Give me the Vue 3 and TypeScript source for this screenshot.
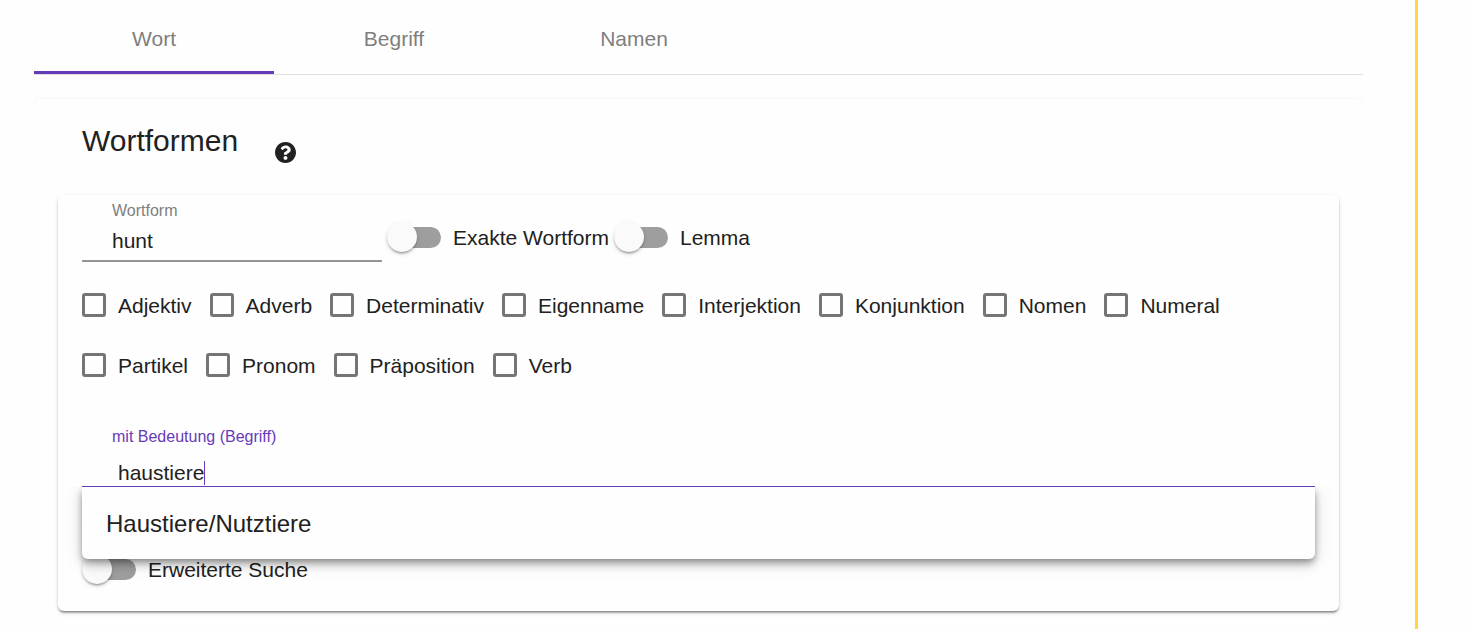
<script setup lang="ts">
import { ref } from 'vue'

const tabs: string[] = ['Wort', 'Begriff', 'Namen']
const activeTab = ref(0)

const wordForm = ref('hunt')
const meaning = ref('haustiere')
const exact = ref(false)
const lemma = ref(false)
const advanced = ref(false)

const wordClasses: string[] = [
  'Adjektiv', 'Adverb', 'Determinativ', 'Eigenname', 'Interjektion', 'Konjunktion',
  'Nomen', 'Numeral', 'Partikel', 'Pronom', 'Präposition', 'Verb',
]
const selectedClasses = ref<string[]>([])
const suggestions: string[] = ['Haustiere/Nutztiere']
</script>

<template>
  <div class="page">
    <main class="content">
      <nav class="tabs" role="tablist">
        <button
          v-for="(tab, i) in tabs"
          :key="tab"
          type="button"
          role="tab"
          class="tab"
          :class="{ active: i === activeTab }"
          :aria-selected="i === activeTab"
          @click="activeTab = i"
        >{{ tab }}</button>
      </nav>

      <div class="tab-body">
        <section class="panel">
          <header class="panel-head">
            <h1 class="title">Wortformen</h1>
            <button type="button" class="help" aria-label="Hilfe">
              <svg viewBox="8 8 496 496" aria-hidden="true">
                <path fill="currentColor" d="M504 256c0 136.997-111.043 248-248 248S8 392.997 8 256C8 119.083 119.043 8 256 8s248 111.083 248 248zM262.655 90c-54.497 0-89.255 22.957-116.549 63.758-3.536 5.286-2.353 12.415 2.715 16.258l34.699 26.31c5.205 3.947 12.621 3.008 16.665-2.122 17.864-22.658 30.113-35.797 57.303-35.797 20.429 0 45.698 13.148 45.698 32.958 0 14.976-12.363 22.667-32.534 33.976C247.128 238.528 216 254.941 216 296v4c0 6.627 5.373 12 12 12h56c6.627 0 12-5.373 12-12v-1.333c0-28.462 83.186-29.647 83.186-106.667 0-58.002-60.165-102-116.531-102zM256 338c-25.365 0-46 20.635-46 46 0 25.364 20.635 46 46 46s46-20.636 46-46c0-25.364-20.635-46-46-46z" />
              </svg>
            </button>
          </header>

          <form class="card" @submit.prevent>
            <div class="word-row">
              <div class="field">
                <label class="field-label" for="wordform">Wortform</label>
                <input id="wordform" v-model="wordForm" class="field-input" type="text" />
              </div>
              <label class="toggle">
                <input v-model="exact" class="switch" type="checkbox" role="switch" />
                <span>Exakte Wortform</span>
              </label>
              <label class="toggle">
                <input v-model="lemma" class="switch" type="checkbox" role="switch" />
                <span>Lemma</span>
              </label>
            </div>

            <div class="classes">
              <label v-for="name in wordClasses" :key="name" class="check">
                <input v-model="selectedClasses" class="box" type="checkbox" :value="name" />
                <span class="check-text">{{ name }}</span>
              </label>
            </div>

            <div class="meaning">
              <label class="field-label focused" for="meaning">mit Bedeutung (Begriff)</label>
              <div class="meaning-line">
                <input id="meaning" v-model="meaning" class="meaning-input" type="text" autocomplete="off" />
                <span class="caret" aria-hidden="true"></span>
              </div>
              <div class="options" role="listbox">
                <button
                  v-for="item in suggestions"
                  :key="item"
                  type="button"
                  role="option"
                  class="option"
                  @click="meaning = item"
                >{{ item }}</button>
              </div>
            </div>

            <label class="toggle">
              <input v-model="advanced" class="switch" type="checkbox" role="switch" />
              <span>Erweiterte Suche</span>
            </label>
          </form>
        </section>
      </div>
    </main>
  </div>
</template>

<style>
body {
  background: #fefefe;
}
</style>

<style scoped>
.page {
  box-sizing: border-box;
  min-height: 100vh;
  display: flex;
  padding-right: 55px;
  font-family: "Liberation Sans", Arial, sans-serif;
  font-size: 21px;
  line-height: 24px;
  color: #212121;
}
.page *,
.page *::before {
  box-sizing: border-box;
}
button,
input {
  margin: 0;
  padding: 0;
  border: 0;
  background: none;
  font: inherit;
  color: inherit;
  outline: none;
}
.content {
  flex: 1;
  min-width: 0;
  padding: 2px 52px 0 34px;
  border-right: 3px solid #fdd640;
}
.tabs {
  display: flex;
  border-bottom: 1px solid #e0e0e0;
}
.tab {
  width: 240px;
  height: 72px;
  padding-top: 5px;
  border-bottom: 3px solid transparent;
  color: #7e7e7e;
}
.tab.active {
  border-bottom-color: #673ab7;
}
.tab-body {
  padding-top: 24px;
  overflow: hidden;
}
.panel {
  padding: 24px;
  border-radius: 6px;
  box-shadow: 0 3px 2px -2px rgba(0, 0, 0, 0.2), 0 2px 2px rgba(0, 0, 0, 0.14), 0 2px 5px rgba(0, 0, 0, 0.12);
}
.panel-head {
  display: flex;
  gap: 37px;
  height: 72px;
  padding-left: 24px;
}
.title {
  margin: 0;
  font-size: 30px;
  font-weight: 400;
  line-height: 36px;
}
.help {
  width: 21px;
  height: 21px;
  margin-top: 19px;
}
.help svg {
  display: block;
  width: 21px;
  height: 21px;
}
.card {
  padding: 0 24px 17px;
  border-radius: 6px;
  box-shadow: 0 3px 2px -2px rgba(0, 0, 0, 0.3), 0 2px 2px rgba(0, 0, 0, 0.2), 0 2px 5px rgba(0, 0, 0, 0.12);
}
.word-row {
  display: flex;
  align-items: flex-end;
  gap: 5px;
  margin-bottom: 13px;
}
.field {
  width: 300px;
  padding: 7px 30px 7px;
  border-bottom: 2px solid #949494;
}
.field-label {
  display: block;
  font-size: 16px;
  line-height: 18px;
  color: #7e7e7e;
}
.field-label.focused {
  padding-left: 30px;
  color: #673ab7;
}
.field-input {
  display: block;
  width: 100%;
  height: 24px;
  margin-top: 9px;
}
.toggle {
  display: flex;
  align-items: center;
  gap: 12px;
  height: 48px;
}
.switch {
  appearance: none;
  position: relative;
  flex: none;
  width: 54px;
  height: 21px;
  margin-bottom: 1px;
  border-radius: 12px;
  background: #9e9e9e;
}
.switch::before {
  content: "";
  position: absolute;
  top: -5px;
  left: 0;
  width: 30px;
  height: 30px;
  border-radius: 50%;
  background: #fafafa;
  box-shadow: 0 3px 2px -2px rgba(0, 0, 0, 0.2), 0 2px 2px rgba(0, 0, 0, 0.14), 0 2px 5px rgba(0, 0, 0, 0.12);
}
.switch:checked::before {
  left: 24px;
}
.classes {
  display: flex;
  flex-wrap: wrap;
  column-gap: 18px;
}
.check {
  display: flex;
  align-items: center;
  gap: 12px;
  height: 60px;
}
.check-text {
  padding-top: 2px;
}
.box {
  appearance: none;
  width: 24px;
  height: 24px;
  border: 3px solid #757575;
  border-radius: 3px;
}
.box:checked {
  background: #673ab7;
  border-color: #673ab7;
}
.meaning {
  position: relative;
  padding-top: 33px;
  margin-bottom: 59px;
  border-bottom: 1px solid #673ab7;
}
.meaning-line {
  display: flex;
  padding: 15px 0 1px 36px;
}
.meaning-input {
  field-sizing: content;
  height: 24px;
}
.caret {
  width: 1px;
  height: 24px;
  background: #673ab7;
}
.options {
  position: absolute;
  z-index: 1;
  top: calc(100% + 1px);
  left: 0;
  right: 0;
  border-radius: 0 0 6px 6px;
  background: #fefefe;
  box-shadow: 0 3px 6px -1px rgba(0, 0, 0, 0.3), 0 6px 8px rgba(0, 0, 0, 0.2), 0 2px 22px rgba(0, 0, 0, 0.12);
  clip-path: inset(0 -40px -40px);
}
.option {
  display: block;
  width: 100%;
  height: 72px;
  padding: 2px 24px 0;
  font-size: 24px;
  text-align: left;
}
</style>
